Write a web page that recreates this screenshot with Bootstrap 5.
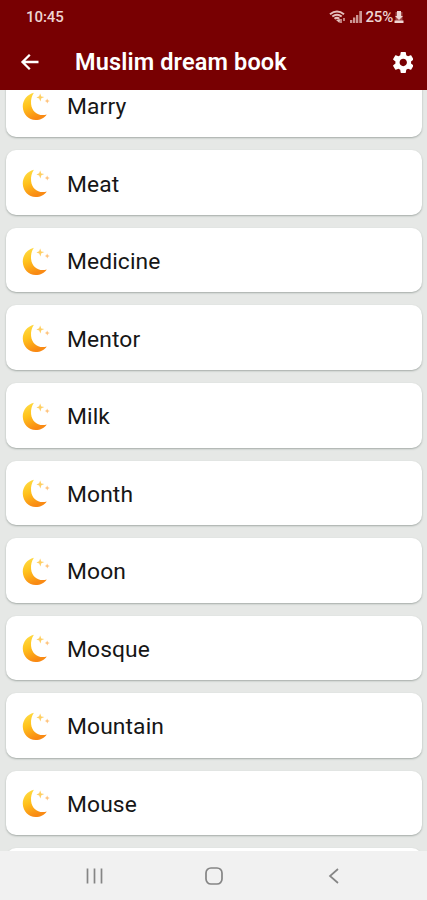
<!DOCTYPE html>
<html lang="en">
<head>
<meta charset="utf-8">
<meta name="viewport" content="width=device-width, initial-scale=1">
<title>Muslim dream book</title>
<link href="https://cdn.jsdelivr.net/npm/bootstrap@5.3.0/dist/css/bootstrap.min.css" rel="stylesheet">
<style>
body { font-family: Roboto, "Liberation Sans", sans-serif; background: #e6e8e6; }
svg { display: block; flex: none; }
.top-area { background: #780002; height: 90px; color: #fff; }
.status-row { height: 34px; padding: 0 23px 0 26px; font-size: 15px; color: #eed5d3; font-weight: 500; }
.status-row .clock { letter-spacing: -.05px; }
.status-row .battery-text { margin-left: 2px; margin-right: 1px; letter-spacing: -.2px; }
.title-row { height: 56px; padding: 0 14px 0 20px; }
.title-row h1 { font-size: 23.5px; font-weight: 600; line-height: 57px; margin-left: 35px; letter-spacing: .14px; }
.dream-list { margin-top: -17.2px; padding: 0 5px 0 5.5px; gap: 13.06px; }
.dream-list .card { height: 64.5px; flex: none; border-radius: 10px; padding-left: 16px; box-shadow: 0 1px 2px #a3aaa6; }
.dream-list .card svg { margin-top: 2px; }
.dream-list .card-title { font-size: 22.8px; font-weight: 400; line-height: 30px; color: #161616; margin-left: 16.5px; padding-top: 4px; letter-spacing: .12px; }
.nav-row { height: 49px; background: #f1f1f1; padding: 0 87px 0 85px; }
.nav-row .home { margin-right: 4px; }
</style>
</head>
<body class="vh-100 overflow-hidden d-flex flex-column">
<svg width="0" height="0" class="position-absolute" aria-hidden="true">
  <defs>
    <linearGradient id="gold" x1="0" y1="0" x2=".35" y2="1">
      <stop offset="0" stop-color="#ffe04a"/><stop offset=".5" stop-color="#ffc21c"/><stop offset="1" stop-color="#f98a14"/>
    </linearGradient>
    <symbol id="crescent" viewBox="0 0 30 30">
      <path d="M12.300.8C5.500 2.400.6 8.200.8 15.300c.3 7.600 6 13.700 13.300 13.700 5 0 9.300-2.200 11.500-5.700-8.500 2.300-15.400-2.600-16.200-10.900-.4-4.400.6-8.400 2.900-11.600z" fill="url(#gold)"/>
      <path d="M18.800 1.600l1.100 3 3.200.7-3.100 1.200-1 3.200-1.200-3.100-2.900-.8 2.800-1.300z" fill="#ffcf62"/>
      <path d="M26 6.800l.8 1.700 1.900.7-1.800.8-.7 1.900-.9-1.900-1.700-.6 1.700-.9z" fill="#ffc27a"/>
    </symbol>
  </defs>
</svg>
<header class="top-area flex-shrink-0">
  <div class="status-row d-flex justify-content-between align-items-center">
    <span class="clock">10:45</span>
    <div class="d-flex align-items-center">
      <svg width="17" height="15" viewBox="0 0 17 15" fill="none" stroke="#e5c0bd">
        <path d="M1 4.200Q8 -1.200 15 4.200M3.300 6.500Q8 2.900 12.700 6.500M5.500 8.800Q8 6.900 10.300 8.800" stroke-width="2"/>
        <path d="M7 10l3.500 3 .8-4" fill="#e5c0bd" stroke="none"/>
        <path d="M12 9v4M15 8v3" stroke-width="1.300"/>
      </svg>
      <svg class="ms-1" width="12" height="14" viewBox="0 0 12 14" fill="#cc9694">
        <path d="M0 10h2.300v3H0zM3 7.500h2.300V13H3zM6 5h2.300v8H6zM9.300 1H12v12H9.300z"/>
      </svg>
      <span class="battery-text ms-1">25%</span>
      <svg width="10" height="14" viewBox="0 0 10 14" fill="#efd6d3">
        <path d="M3 1h4v5h2L5 10 1 6h2zM.5 10.500h9V13h-9z"/><path d="M1.500 2h7v9h-7z" opacity=".35"/>
      </svg>
    </div>
  </div>
  <div class="title-row d-flex align-items-center">
    <svg width="20" height="18" viewBox="0 0 20 18" fill="none" stroke="#fff" stroke-width="2.300">
      <path d="M18.500 9H3M9.800 1.700L2.500 9l7.300 7.300"/>
    </svg>
    <h1 class="mb-0">Muslim dream book</h1>
    <svg class="ms-auto" width="20.500" height="21" viewBox="2.200 2 19.600 20" fill="#fff">
      <path d="M19.430 12.980c.04-.32.07-.64.07-.98s-.03-.66-.07-.98l2.110-1.650c.19-.15.24-.42.12-.64l-2-3.460c-.12-.22-.39-.3-.61-.22l-2.490 1c-.52-.4-1.080-.73-1.690-.98l-.38-2.650C14.460 2.180 14.250 2 14 2h-4c-.25 0-.46.18-.49.42l-.38 2.650c-.61.25-1.170.59-1.690.98l-2.490-1c-.23-.09-.49 0-.61.22l-2 3.460c-.13.22-.07.49.12.64l2.110 1.650c-.04.32-.07.65-.07.98s.03.66.07.98l-2.110 1.650c-.19.15-.24.42-.12.64l2 3.460c.12.22.39.3.61.22l2.490-1c.52.4 1.080.73 1.690.98l.38 2.650c.03.24.24.42.49.42h4c.25 0 .46-.18.49-.42l.38-2.650c.61-.25 1.170-.59 1.690-.98l2.490 1c.23.09.49 0 .61-.22l2-3.460c.12-.22.07-.49-.12-.64l-2.110-1.650zM12 15.500c-1.930 0-3.500-1.570-3.500-3.500s1.570-3.500 3.500-3.500 3.500 1.570 3.500 3.500-1.570 3.500-3.500 3.500z"/>
    </svg>
  </div>
</header>
<main class="flex-grow-1 overflow-hidden">
  <div class="dream-list d-flex flex-column">
    <div class="card border-0 flex-row align-items-center"><svg width="29" height="29"><use href="#crescent"/></svg><h2 class="card-title mb-0">Marry</h2></div>
    <div class="card border-0 flex-row align-items-center"><svg width="29" height="29"><use href="#crescent"/></svg><h2 class="card-title mb-0">Meat</h2></div>
    <div class="card border-0 flex-row align-items-center"><svg width="29" height="29"><use href="#crescent"/></svg><h2 class="card-title mb-0">Medicine</h2></div>
    <div class="card border-0 flex-row align-items-center"><svg width="29" height="29"><use href="#crescent"/></svg><h2 class="card-title mb-0">Mentor</h2></div>
    <div class="card border-0 flex-row align-items-center"><svg width="29" height="29"><use href="#crescent"/></svg><h2 class="card-title mb-0">Milk</h2></div>
    <div class="card border-0 flex-row align-items-center"><svg width="29" height="29"><use href="#crescent"/></svg><h2 class="card-title mb-0">Month</h2></div>
    <div class="card border-0 flex-row align-items-center"><svg width="29" height="29"><use href="#crescent"/></svg><h2 class="card-title mb-0">Moon</h2></div>
    <div class="card border-0 flex-row align-items-center"><svg width="29" height="29"><use href="#crescent"/></svg><h2 class="card-title mb-0">Mosque</h2></div>
    <div class="card border-0 flex-row align-items-center"><svg width="29" height="29"><use href="#crescent"/></svg><h2 class="card-title mb-0">Mountain</h2></div>
    <div class="card border-0 flex-row align-items-center"><svg width="29" height="29"><use href="#crescent"/></svg><h2 class="card-title mb-0">Mouse</h2></div>
    <div class="card border-0"></div>
  </div>
</main>
<nav class="nav-row flex-shrink-0 d-flex justify-content-between align-items-center" aria-label="System navigation">
  <svg width="18" height="18" viewBox="0 0 18 18" fill="none" stroke="#858585" stroke-width="1.700"><path d="M2.500 1.500v15M9.500 1.500v15M16.500 1.500v15"/></svg>
  <svg class="home" width="18" height="18" viewBox="0 0 18 18" fill="none" stroke="#858585" stroke-width="1.700"><rect x="1" y="1" width="16" height="16" rx="5"/></svg>
  <svg width="12" height="18" viewBox="0 0 12 18" fill="none" stroke="#858585" stroke-width="1.700"><path d="M10 2L2 9l8 7"/></svg>
</nav>
<script src="https://cdn.jsdelivr.net/npm/bootstrap@5.3.0/dist/js/bootstrap.bundle.min.js"></script>
</body>
</html>
